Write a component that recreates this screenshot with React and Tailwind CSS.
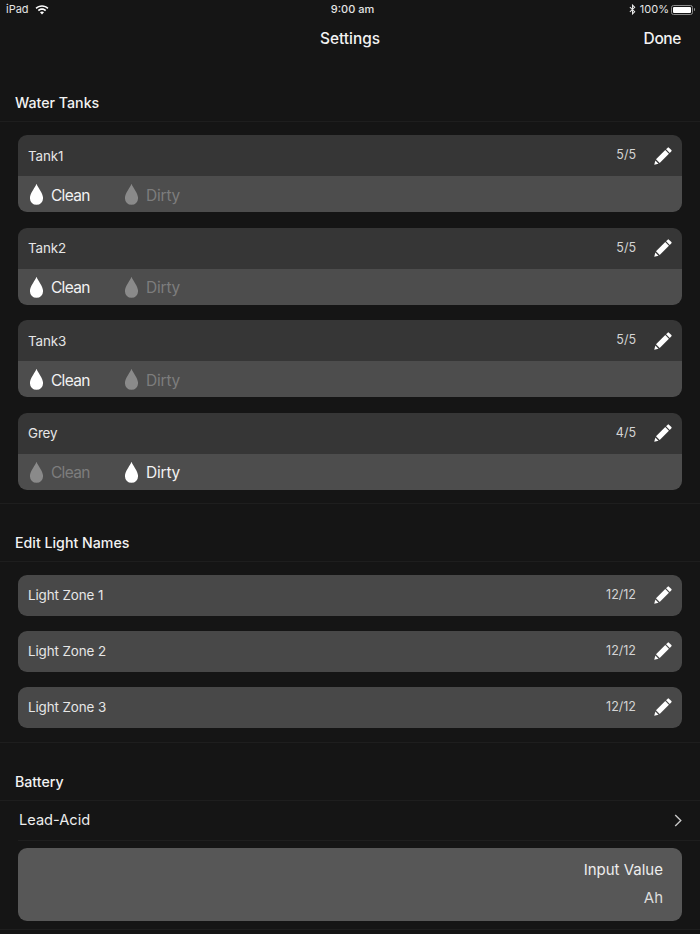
function Drop({ className }) {
  return (
    <svg viewBox="0 0 16 24" className={className} fill="currentColor">
      <path d="M8 .5C6.8 4.2 1 10.5 1 16a7 7 0 0 0 14 0C15 10.5 9.200 4.200 8 .5Z" />
    </svg>
  );
}

function Pencil() {
  return (
    <svg viewBox="0 0 20 20" className="w-[18px] h-[18px] shrink-0" fill="#fff">
      <path d="M15.200 .7a1 1 0 0 1 1.400 0l2.700 2.700a1 1 0 0 1 0 1.400l-1.800 1.800-4.100-4.100Z" />
      <path d="M12.500 3.400l4.100 4.100L6.300 17.800l-4.100-4.100Z" />
      <path d="M1.500 15l3.500 3.500-4.700 1.200Z" />
    </svg>
  );
}

function Section({ title, children }) {
  return (
    <section>
      <div className="h-[58px] pt-[24px] pl-[15px] text-[14.200px] leading-[30px] font-medium text-[#f2f2f2] border-b border-[#1e1e1e]">
        {title}
      </div>
      {children}
    </section>
  );
}

function NameRow({ name, count, dark }) {
  return (
    <div className={`h-[41px] flex items-center pl-[10px] pr-[10px] ${dark ? "bg-[#363636]" : "bg-[#484848] rounded-[9px]"}`}>
      <span className="text-[13.400px] tracking-[-0.1px] text-[#e6e6e6] pt-[1px]">{name}</span>
      <span className="ml-auto text-[12.500px] text-[#d4d4d4] mr-[18px]">{count}</span>
      <Pencil />
    </div>
  );
}

function Tank({ name, count, active }) {
  const on = "text-[#fff]";
  const off = "text-[#8a8a8a]";
  return (
    <div className="mx-[18px] rounded-[9px] overflow-hidden">
      <NameRow name={name} count={count} dark />
      <div className="h-[36px] bg-[#4d4d4d] flex items-center pl-[11px] pt-[3px] text-[15.500px]">
        <div className={`flex items-center w-[95px] ${active === "Clean" ? on : off}`}>
          <Drop className="w-[15px] h-[23px] mr-[7px] -mt-[2px]" />
          <span className={`tracking-[-0.7px] ${active === "Clean" ? "text-[#f2f2f2]" : "text-[#7d7d7d]"}`}>Clean</span>
        </div>
        <div className={`flex items-center ${active === "Dirty" ? on : off}`}>
          <Drop className="w-[15px] h-[23px] mr-[7px] -mt-[2px]" />
          <span className={`tracking-[-0.2px] ${active === "Dirty" ? "text-[#f2f2f2]" : "text-[#7d7d7d]"}`}>Dirty</span>
        </div>
      </div>
    </div>
  );
}

export default function App() {
  return (
    <div className="w-[700px] h-[934px] overflow-hidden bg-[#151515] text-white font-['Inter','Liberation_Sans',sans-serif]">
      <div className="h-[19px] relative flex items-center pl-[6px] pr-[5px] text-[11px] text-[#e4e4e4]">
        <span>iPad</span>
        <svg viewBox="0 0 16 12" className="w-[14px] h-[11px] ml-[6px]" fill="#fff">
          <path d="M8 1C5.200 1 2.600 2 .6 3.900l1.300 1.400C3.500 3.800 5.700 2.900 8 2.900s4.500.9 6.100 2.400l1.300-1.400C13.400 2 10.800 1 8 1Z" />
          <path d="M8 4.700c-1.800 0-3.500.7-4.800 1.900l1.300 1.400C5.400 7.100 6.700 6.600 8 6.600s2.600.5 3.500 1.400l1.300-1.400C11.500 5.400 9.800 4.700 8 4.700Z" />
          <path d="M8 8.300c-.9 0-1.700.3-2.300.9L8 11.700l2.300-2.500c-.6-.6-1.400-.9-2.300-.9Z" />
        </svg>
        <span className="absolute left-[5px] right-0 text-center font-medium">9:00 am</span>
        <div className="ml-auto flex items-center relative">
          <svg viewBox="0 0 8 12" className="w-[7px] h-[11px] mr-[4px]" fill="none" stroke="#e8e8e8" strokeWidth="1.200">
            <path d="M1 3.200l5.500 5.300L4 11V1l2.500 2.500L1 8.800" />
          </svg>
          <span>100%</span>
          <div className="ml-[2px] w-[22px] h-[10px] rounded-[2.500px] border border-[#8c8c8c] p-[1px]">
            <div className="w-full h-full rounded-[1px] bg-white" />
          </div>
          <div className="w-[1.500px] h-[3px] ml-[0.500px] bg-[#8c8c8c] rounded-r-[1px]" />
        </div>
      </div>

      <div className="h-[41px] pl-[15px] pr-[19px] relative flex items-center justify-end">
        <span className="absolute left-0 right-0 -top-[1px] h-full flex items-center justify-center text-[15.400px] font-medium text-[#f2f2f2]">Settings</span>
        <span className="text-[15.500px] tracking-[-0.4px] font-medium text-[#f2f2f2] -mt-[2px]">Done</span>
      </div>

      <div className="h-[4px]" />

      <Section title="Water Tanks">
        <div className="pt-[13px] pb-[13px] flex flex-col gap-[15.500px] border-b border-[#1e1e1e]">
          <Tank name="Tank1" count="5/5" active="Clean" />
          <Tank name="Tank2" count="5/5" active="Clean" />
          <Tank name="Tank3" count="5/5" active="Clean" />
          <Tank name="Grey" count="4/5" active="Dirty" />
        </div>
      </Section>

      <Section title="Edit Light Names">
        <div className="pt-[13px] pb-[14px] flex flex-col gap-[15px] border-b border-[#1e1e1e]">
          {["Light Zone 1", "Light Zone 2", "Light Zone 3"].map((n) => (
            <div key={n} className="mx-[18px]">
              <NameRow name={n} count="12/12" />
            </div>
          ))}
        </div>
      </Section>

      <Section title="Battery">
        <div className="ml-[18px] h-[40px] flex items-center pr-[18px] border-b border-[#1e1e1e]">
          <span className="text-[14.600px] pl-[1px] pt-[1px] text-[#ededed]">Lead-Acid</span>
          <svg viewBox="0 0 8 14" className="ml-auto w-[8px] h-[13px]" fill="none" stroke="#c8c8c8" strokeWidth="1.500">
            <path d="M1 1l6 6-6 6" />
          </svg>
        </div>
        <div className="mx-[18px] mt-[7px] h-[73px] rounded-[9px] bg-[#575757] flex flex-col items-end justify-center pr-[19px] pb-[2px] gap-[7px] text-[15px]">
          <span className="text-[#ededed] leading-[21px]">Input Value</span>
          <span className="text-[#dddddd] leading-[21px]">Ah</span>
        </div>
        <div className="mt-[8px] border-b border-[#1e1e1e]" />
      </Section>
    </div>
  );
}
